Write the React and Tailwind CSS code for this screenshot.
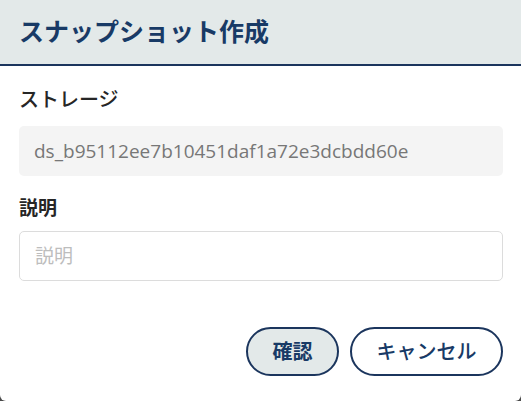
const FONT = { fontFamily: '"Open Sans", "Noto Sans CJK JP", sans-serif' };

export default function App() {
  return (
    <div className="w-[521px] h-[401px] bg-[#4a4a4a]" style={FONT}>
      <div className="w-full h-full bg-white rounded-b-[6px] overflow-hidden flex flex-col">
        {/* HEADER */}
        <div className="h-[66px] shrink-0 bg-[#e3e9e9] border-b-2 border-[#1b355d] flex items-center pl-[19px] pb-[2px]">
          <h1 className="text-[25px] font-bold text-[#183a66] leading-none">
            スナップショット作成
          </h1>
        </div>

        {/* BODY */}
        <div className="pl-[19px] pr-[18px] pt-[20px] flex flex-col">
          <p className="text-[20px] font-medium text-[#262626] leading-[28px]">ストレージ</p>
          <div className="mt-[12px] h-[50px] rounded-[5px] bg-[#f4f4f4] flex items-center px-[15px]">
            <span className="text-[19px] text-[#777] leading-none">ds_b95112ee7b10451daf1a72e3dcbdd60e</span>
          </div>

          <p className="mt-[18px] text-[19px] font-bold text-[#262626] leading-[28px]">説明</p>
          <input
            placeholder="説明"
            className="mt-[9px] h-[50px] rounded-[5px] border border-[#dcdcdc] px-[15px] text-[19px] placeholder:text-[#bdbdbd] outline-none"
          />

          <div className="mt-[46px] flex justify-end gap-[11px]">
            <button className="w-[93px] h-[49px] rounded-full border-2 border-[#1b355d] bg-[#e3e9e9] text-[20px] font-bold text-[#183a66]">
              確認
            </button>
            <button className="w-[153px] h-[49px] rounded-full border-2 border-[#1b355d] bg-white text-[20px] font-medium text-[#183a66]">
              キャンセル
            </button>
          </div>
        </div>
      </div>
    </div>
  );
}
